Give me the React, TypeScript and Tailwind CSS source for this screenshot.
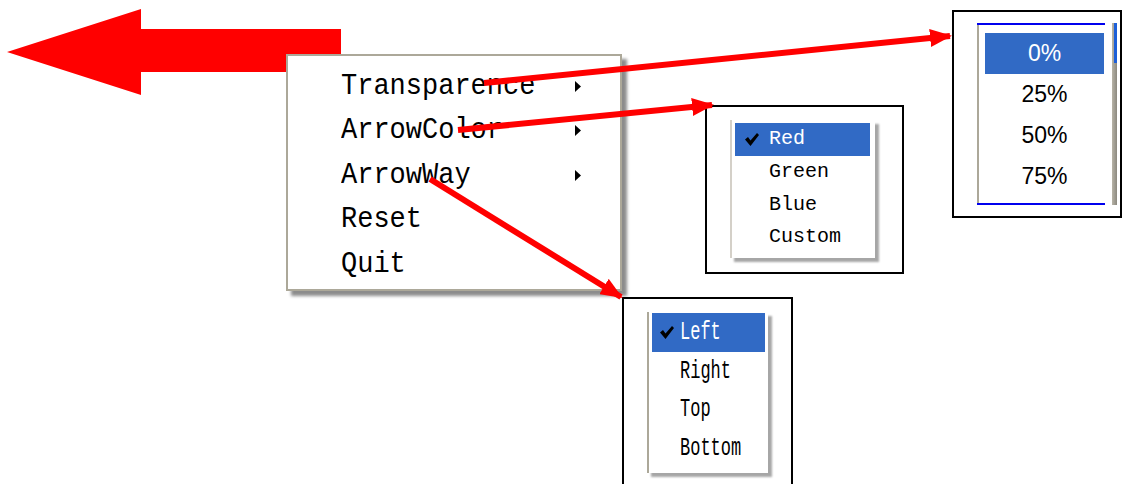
import React from 'react';

const mono = { fontFamily: '"Liberation Mono", "DejaVu Sans Mono", monospace' };

function SubArrow() {
  return (
    <svg width="8" height="11" viewBox="0 0 8 11" className="shrink-0">
      <path d="M1 0 L7 5.5 L1 11 Z" fill="#000" />
    </svg>
  );
}

function Tick({ className = '' }: { className?: string }) {
  return (
    <svg width="14" height="13" viewBox="0 0 14 13" className={className}>
      <path d="M0 6.5 L3 4 L5.5 7.5 L12 0 L14 2 L5.5 13 Z" fill="#000" />
    </svg>
  );
}

const mainItems = [
  { label: 'Transparence', sub: true },
  { label: 'ArrowColor', sub: true },
  { label: 'ArrowWay', sub: true },
  { label: 'Reset', sub: false },
  { label: 'Quit', sub: false },
];

function MainMenu() {
  return (
    <div className="absolute left-[286px] top-[54px] w-[336px] h-[237px] border-2 border-[#aca899] bg-white shadow-[5px_5px_3px_rgba(0,0,0,0.45)] pt-[8px]">
      {mainItems.map((it) => (
        <div key={it.label} className="h-[44.5px] flex items-center pl-[53px] pr-[38px]">
          <span className="flex-1 text-[27px] leading-none text-black scale-y-[1.12] origin-left" style={mono}>
            {it.label}
          </span>
          {it.sub && <SubArrow />}
        </div>
      ))}
    </div>
  );
}

function ColorMenu() {
  const items = ['Red', 'Green', 'Blue', 'Custom'];
  return (
    <div className="absolute left-[705px] top-[105px] w-[199px] h-[169px] border-2 border-black bg-white">
      <div className="ml-[23px] mt-[13px] w-[145px] h-[138px] border-l-2 border-[#d4d0c8] bg-white shadow-[4px_4px_2px_rgba(0,0,0,0.35)] pt-[3px] pl-[3px] pr-[5px]">
        {items.map((t, i) => (
          <div
            key={t}
            className={`h-[32.7px] flex items-center ${i === 0 ? 'bg-[#316ac5] text-white' : 'text-black'}`}
          >
            <span className="w-[34px] flex justify-center">{i === 0 && <Tick />}</span>
            <span className="text-[20px] leading-none" style={mono}>{t}</span>
          </div>
        ))}
      </div>
    </div>
  );
}

function OpacityMenu() {
  const items = ['0%', '25%', '50%', '75%'];
  return (
    <div className="absolute left-[952px] top-[10px] w-[170px] h-[208px] border-2 border-black bg-white">
      <div className="relative ml-[23px] mt-[11px] w-[140px] h-[182px] bg-white">
        <div className="absolute left-0 right-[12px] top-0 h-[2px] bg-[#0000ee]" />
        <div className="absolute left-0 right-[12px] bottom-0 h-[2px] bg-[#0000ee]" />
        <div className="absolute right-0 top-0 bottom-0 w-[5px] bg-gradient-to-r from-[#b8b4a8] to-[#8c897f]" />
        <div className="absolute right-0 top-0 h-[40px] w-[3px] bg-[#1d5fd8]" />
        <div className="flex flex-col h-full border-l-2 border-[#aca899] pt-[10px] pl-[6px] pr-[13px]">
          {items.map((t, i) => (
            <div
              key={t}
              className={`h-[41px] flex items-center justify-center ${i === 0 ? 'bg-[#316ac5] text-white' : 'text-black'}`}
            >
              <span className="text-[23px] leading-none" style={{ fontFamily: '"Liberation Sans", Arial, sans-serif' }}>
                {t}
              </span>
            </div>
          ))}
          <div className="flex-1" />
        </div>
      </div>
    </div>
  );
}

function WayMenu() {
  const items = ['Left', 'Right', 'Top', 'Bottom'];
  return (
    <div className="absolute left-[622px] top-[297px] w-[171px] h-[200px] border-2 border-black bg-white">
      <div className="ml-[23px] mt-[13px] w-[121px] h-[161px] border-l-2 border-[#aca899] bg-white shadow-[4px_4px_2px_rgba(0,0,0,0.35)] pt-[1px] pl-[3px] pr-[3px]">
        {items.map((t, i) => (
          <div
            key={t}
            className={`h-[38.7px] flex items-center ${i === 0 ? 'bg-[#316ac5] text-white' : 'text-black'}`}
          >
            <span className="w-[28px] flex justify-center pl-[2px]">{i === 0 && <Tick />}</span>
            <span className="text-[17px] leading-none scale-y-[1.55] origin-left" style={mono}>{t}</span>
          </div>
        ))}
      </div>
    </div>
  );
}

export default function App() {
  return (
    <div className="relative w-[1126px] h-[484px] bg-white overflow-hidden">
      <svg className="absolute left-0 top-0" width="1126" height="484">
        <polygon points="7,52 141,9 141,29 341,29 341,72 141,72 141,95" fill="#ff0000" />
      </svg>
      <MainMenu />
      <ColorMenu />
      <OpacityMenu />
      <WayMenu />
      <svg className="absolute left-0 top-0 pointer-events-none" width="1126" height="484">
        <defs>
          <marker id="head" markerUnits="userSpaceOnUse" markerWidth="22" markerHeight="18" refX="20" refY="9" orient="auto">
            <path d="M0 0 L22 9 L0 18 Z" fill="#ff0000" />
          </marker>
        </defs>
        <g stroke="#ff0000" strokeWidth="6" fill="none">
          <line x1="484" y1="83" x2="950" y2="36" markerEnd="url(#head)" />
          <line x1="458" y1="130" x2="712" y2="105" markerEnd="url(#head)" />
          <line x1="430" y1="179" x2="621" y2="297" markerEnd="url(#head)" />
        </g>
      </svg>
    </div>
  );
}
